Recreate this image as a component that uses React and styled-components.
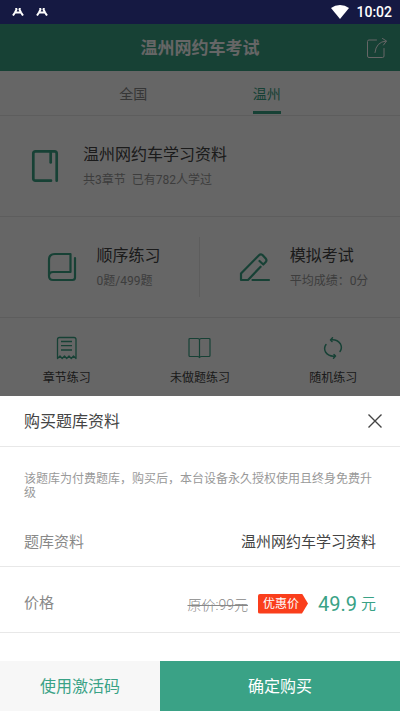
import styled, {createGlobalStyle} from "styled-components";
import {useState} from "react";


const cities = ['全国', '温州']

const practices = [
    {
        title: '顺序练习',
        info: '0题/499题',
        icon: <BookIcon/>,
    },
    {
        title: '模拟考试',
        info: '平均成绩：0分',
        icon: <PencilIcon/>,
    },
]

const shortcuts = [
    {
        title: '章节练习',
        icon: <ChapterIcon/>,
    },
    {
        title: '未做题练习',
        icon: <OpenBookIcon/>,
    },
    {
        title: '随机练习',
        icon: <RandomIcon/>,
    },
]


function App() {
    const [city, setCity] = useState('温州');
    const [open, setOpen] = useState(true);

    return (
        <Screen>
            <GlobalStyle/>
            <StatusBar>
                <StatusIcons>
                    <DebugIcon/>
                    <DebugIcon/>
                </StatusIcons>
                <StatusIcons>
                    <WifiIcon/>
                    <time>10:02</time>
                </StatusIcons>
            </StatusBar>
            <Page>
                <Header>
                    <h1>温州网约车考试</h1>
                    <ShareButton aria-label="分享">
                        <ShareIcon/>
                    </ShareButton>
                </Header>
                <Tabs>
                    {
                        cities.map((item) => {
                            return <Tab key={item} $active={item === city} onClick={() => setCity(item)}>
                                <span>{item}</span>
                            </Tab>
                        })
                    }
                </Tabs>
                <Course>
                    <IconBox><CourseIcon/></IconBox>
                    <Texts>
                        <Title>温州网约车学习资料</Title>
                        <Info>共3章节&nbsp; 已有782人学过</Info>
                    </Texts>
                </Course>
                <Practices>
                    {
                        practices.map((item) => {
                            return <Practice key={item.title}>
                                <IconBox>{item.icon}</IconBox>
                                <Texts>
                                    <Title>{item.title}</Title>
                                    <Info>{item.info}</Info>
                                </Texts>
                            </Practice>
                        })
                    }
                </Practices>
                <Shortcuts>
                    {
                        shortcuts.map((item) => {
                            return <Shortcut key={item.title}>
                                {item.icon}
                                <span>{item.title}</span>
                            </Shortcut>
                        })
                    }
                </Shortcuts>
                {open && <Overlay>
                    <Sheet role="dialog" aria-labelledby="buy-title">
                        <SheetHeader>
                            <h2 id="buy-title">购买题库资料</h2>
                            <CloseButton aria-label="关闭" onClick={() => setOpen(false)}>
                                <CloseIcon/>
                            </CloseButton>
                        </SheetHeader>
                        <Notice>该题库为付费题库，购买后，本台设备永久授权使用且终身免费升级</Notice>
                        <Row>
                            <Label>题库资料</Label>
                            <Value>温州网约车学习资料</Value>
                        </Row>
                        <PriceRow>
                            <Label>价格</Label>
                            <Prices>
                                <OldPrice>原价:99元</OldPrice>
                                <Discount>优惠价</Discount>
                                <Price>49.9<small>元</small></Price>
                            </Prices>
                        </PriceRow>
                        <Actions>
                            <CodeButton>使用激活码</CodeButton>
                            <BuyButton>确定购买</BuyButton>
                        </Actions>
                    </Sheet>
                </Overlay>}
            </Page>
        </Screen>
    )
}


export default App;


function DebugIcon() {
    return <svg width="12" height="8" viewBox="0 0 12 8" fill="none" stroke="#fff" strokeWidth="2">
        <path d="M4 0L4.500 1.500L3 4.500L1 7.500M8 0L7.500 1.500L9 4.500L11 7.500M3 4.500H9"/>
    </svg>
}

function WifiIcon() {
    return <svg width="18" height="14" viewBox="0 0 18 14" fill="#fff">
        <path d="M9 14L0 3Q4 0 9 0T18 3Z"/>
    </svg>
}

function ShareIcon() {
    return <svg width="22" height="22" viewBox="0 0 22 22" fill="none" stroke="#fff" strokeLinecap="round" strokeLinejoin="round">
        <path d="M10.500 3H3Q1.500 3 1.500 4.500V19Q1.500 20.500 3 20.500H16.500Q18 20.500 18 19V11.500"/>
        <path d="M9 15.500Q10 5 20 4M16.500 1.500L20.500 4L17.500 8"/>
    </svg>
}

function CourseIcon() {
    return <svg width="28" height="34" viewBox="0 0 28 34" fill="none" stroke="#3aa286" strokeWidth="2.700" strokeLinecap="round" strokeLinejoin="round">
        <path d="M20 31.700H4.500Q2.300 31.700 2.300 29.500V4.500Q2.300 2.300 4.500 2.300H23.500Q25.700 2.300 25.700 4.500V31.700"/>
        <path d="M19.700 3V13.500"/>
    </svg>
}

function BookIcon() {
    return <svg width="30" height="30" viewBox="0 0 30 30" fill="none" stroke="#3aa286" strokeWidth="2.200" strokeLinecap="round" strokeLinejoin="round">
        <path d="M28 6V25.500Q28 28 25.500 28H6Q2 28 2 24V8Q2 2 8 2H23.500V20H6Q2 20 2 24"/>
    </svg>
}

function PencilIcon() {
    return <svg width="34" height="30" viewBox="0 0 34 30" fill="none" stroke="#3aa286" strokeWidth="2.200" strokeLinecap="round" strokeLinejoin="round">
        <path d="M21.600 14.700L9 28H2V21.500L20 3.200Q21.700 1.500 23.500 3L26.700 6.500Q28.200 8.200 26.700 10L24.300 12.500L20.500 9M13.500 28H30"/>
    </svg>
}

function ChapterIcon() {
    return <svg width="22" height="24" viewBox="0 0 22 24" fill="none" stroke="#3aa286" strokeWidth="1.300" strokeLinejoin="round">
        <path d="M1.500 22.500V3.500Q1.500 1.500 3.500 1.500H18Q20 1.500 20 3.500V22.500L17.500 20L15.300 22.500L13 20L10.700 22.500L8.500 20L6.200 22.500L4 20Z"/>
        <path d="M5 5.500H16M5 9.700H16M5 14H16"/>
    </svg>
}

function OpenBookIcon() {
    return <svg width="24" height="24" viewBox="0 0 24 24" fill="none" stroke="#3aa286" strokeWidth="1.200" strokeLinejoin="round">
        <path d="M11.500 3.500Q11 2.500 9.500 2.500H2Q1 2.500 1 3.500V19.500Q1 20.500 2 20.500H9.500Q11 20.500 11.500 21.500Q12 20.500 13.500 20.500H21Q22 20.500 22 19.500V3.500Q22 2.500 21 2.500H13.500Q12 2.500 11.500 3.500ZM11.500 3.500V21.500"/>
    </svg>
}

function RandomIcon() {
    return <svg width="24" height="24" viewBox="0 0 24 24" fill="none" stroke="#3aa286" strokeWidth="1.500" strokeLinecap="round" strokeLinejoin="round">
        <path d="M9.500 4Q16 3 19.500 8Q21.500 12 19 15.500M11.500 1.800L9.500 4L11 5.500"/>
        <path d="M14.500 20Q8 21 4.500 16Q2.500 12 5 8.500M13 18.500L14.500 20L12.500 22.200"/>
    </svg>
}

function CloseIcon() {
    return <svg width="14" height="14" viewBox="0 0 14 14" fill="none" stroke="#444" strokeWidth="1.400">
        <path d="M.5 .5L13.500 13.500M13.500 .5L.5 13.500"/>
    </svg>
}


const GlobalStyle = createGlobalStyle`
  * {
    box-sizing: border-box;
  }

  body {
    margin: 0;
    color: #444;
    background: #fff;
    font-family: Roboto, "Noto Sans CJK SC", sans-serif;
  }

  h1, h2, p {
    margin: 0;
    font-weight: 400;
  }

  button {
    border: none;
    padding: 0;
    background: none;
    color: inherit;
    font-family: inherit;
    cursor: pointer;
  }

  svg {
    display: block;
    flex-shrink: 0;
  }
`

const Screen = styled.div`
  display: flex;
  flex-direction: column;
  min-height: 100vh;
`

const StatusBar = styled.div`
  display: flex;
  justify-content: space-between;
  height: 24px;
  padding: 0 8px 0 12px;
  background: #151942;
`

const StatusIcons = styled.div`
  display: flex;
  align-items: center;
  gap: 12px;
  color: #fff;

  time {
    font-size: 14px;
    font-weight: 500;
  }

  &:last-child {
    gap: 7px;
  }
`

const Page = styled.main`
  position: relative;
  flex: 1;
`

const Header = styled.header`
  display: grid;
  grid-template-columns: 34px 1fr 34px;
  align-items: center;
  height: 47px;
  background: #3aa286;
  color: #fff;

  h1 {
    grid-column: 2;
    font-size: 17px;
    font-weight: 700;
    line-height: 24px;
    text-align: center;
  }
`

const ShareButton = styled.button`
  justify-self: start;
`

const Tabs = styled.nav`
  display: flex;
  justify-content: center;
  height: 45px;
  border-bottom: 1px solid #e8e8e8;
`

const Tab = styled.button`
  display: flex;
  justify-content: center;
  width: 33.33%;
  color: ${({$active}) => $active ? '#3aa286' : '#888'};
  font-size: 14px;

  span {
    height: 43px;
    line-height: 46px;
    border-bottom: 3px solid ${({$active}) => $active ? '#3aa286' : 'transparent'};
  }
`

const Course = styled.section`
  display: flex;
  align-items: center;
  gap: 14px;
  height: 101px;
  padding: 0 21px;
  border-bottom: 1px solid #e8e8e8;
`

const IconBox = styled.div`
  display: flex;
  justify-content: center;
  width: 48px;
`

const Texts = styled.div`
  display: flex;
  flex-direction: column;
  gap: 2px;
`

const Title = styled.p`
  font-size: 16px;
  line-height: 26px;
`

const Info = styled.p`
  color: #999;
  font-size: 12px;
  line-height: 20px;
`

const Practices = styled.section`
  display: grid;
  grid-template-columns: 1fr 1fr;
  height: 101px;
  padding: 20px 0;
  border-bottom: 1px solid #e8e8e8;
`

const Practice = styled.div`
  display: flex;
  align-items: center;
  justify-content: center;
  gap: 10px;

  &:first-child {
    border-right: 1px solid #e8e8e8;
  }
`

const Shortcuts = styled.section`
  display: grid;
  grid-template-columns: repeat(3, 1fr);
  padding: 18px 0;
`

const Shortcut = styled.button`
  display: flex;
  flex-direction: column;
  align-items: center;
  gap: 8px;
  color: #444;
  font-size: 12px;
  line-height: 20px;
`

const Overlay = styled.div`
  position: absolute;
  inset: 0;
  display: flex;
  flex-direction: column;
  justify-content: flex-end;
  background: rgba(0, 0, 0, 0.6);
`

const Sheet = styled.div`
  background: #fff;
`

const SheetHeader = styled.div`
  display: flex;
  align-items: center;
  justify-content: space-between;
  height: 51px;
  padding: 0 18px 0 24px;
  border-bottom: 1px solid #e8e8e8;

  h2 {
    padding-top: 2px;
    font-size: 16px;
    line-height: 24px;
  }
`

const CloseButton = styled.button`
  height: 14px;
`

const Notice = styled.p`
  padding: 25px 24px 15px;
  color: #999;
  font-size: 12px;
  line-height: 14px;
`

const Row = styled.div`
  display: flex;
  align-items: center;
  justify-content: space-between;
  height: 52px;
  margin-bottom: 4px;
  padding: 0 24px;
  border-bottom: 1px solid #e8e8e8;
`

const PriceRow = styled(Row)`
  height: 62px;
  margin-bottom: 28px;
`

const Label = styled.span`
  color: #888;
  font-size: 15px;
`

const Value = styled.span`
  font-size: 15px;
`

const Prices = styled.div`
  display: flex;
  align-items: center;
  padding-top: 4px;
`

const OldPrice = styled.del`
  margin-right: 10px;
  color: #888;
  font-size: 14px;
  font-weight: 300;
`

const Discount = styled.span`
  margin-right: 10px;
  padding: 0 9px 0 5px;
  border-radius: 2px;
  background: #fa3e1c;
  color: #fff;
  font-size: 12px;
  line-height: 20px;
  clip-path: polygon(0 0, 88% 0, 100% 50%, 88% 100%, 0 100%);
`

const Price = styled.strong`
  display: flex;
  align-items: center;
  gap: 4px;
  color: #3aa286;
  font-size: 20px;
  font-weight: 400;
  line-height: 24px;

  small {
    font-size: 15px;
  }
`

const Actions = styled.div`
  display: grid;
  grid-template-columns: 2fr 3fr;
`

const CodeButton = styled.button`
  height: 50px;
  padding-bottom: 2px;
  background: #f7f7f7;
  color: #3aa286;
  font-size: 16px;
`

const BuyButton = styled(CodeButton)`
  background: #3aa286;
  color: #fff;
`
